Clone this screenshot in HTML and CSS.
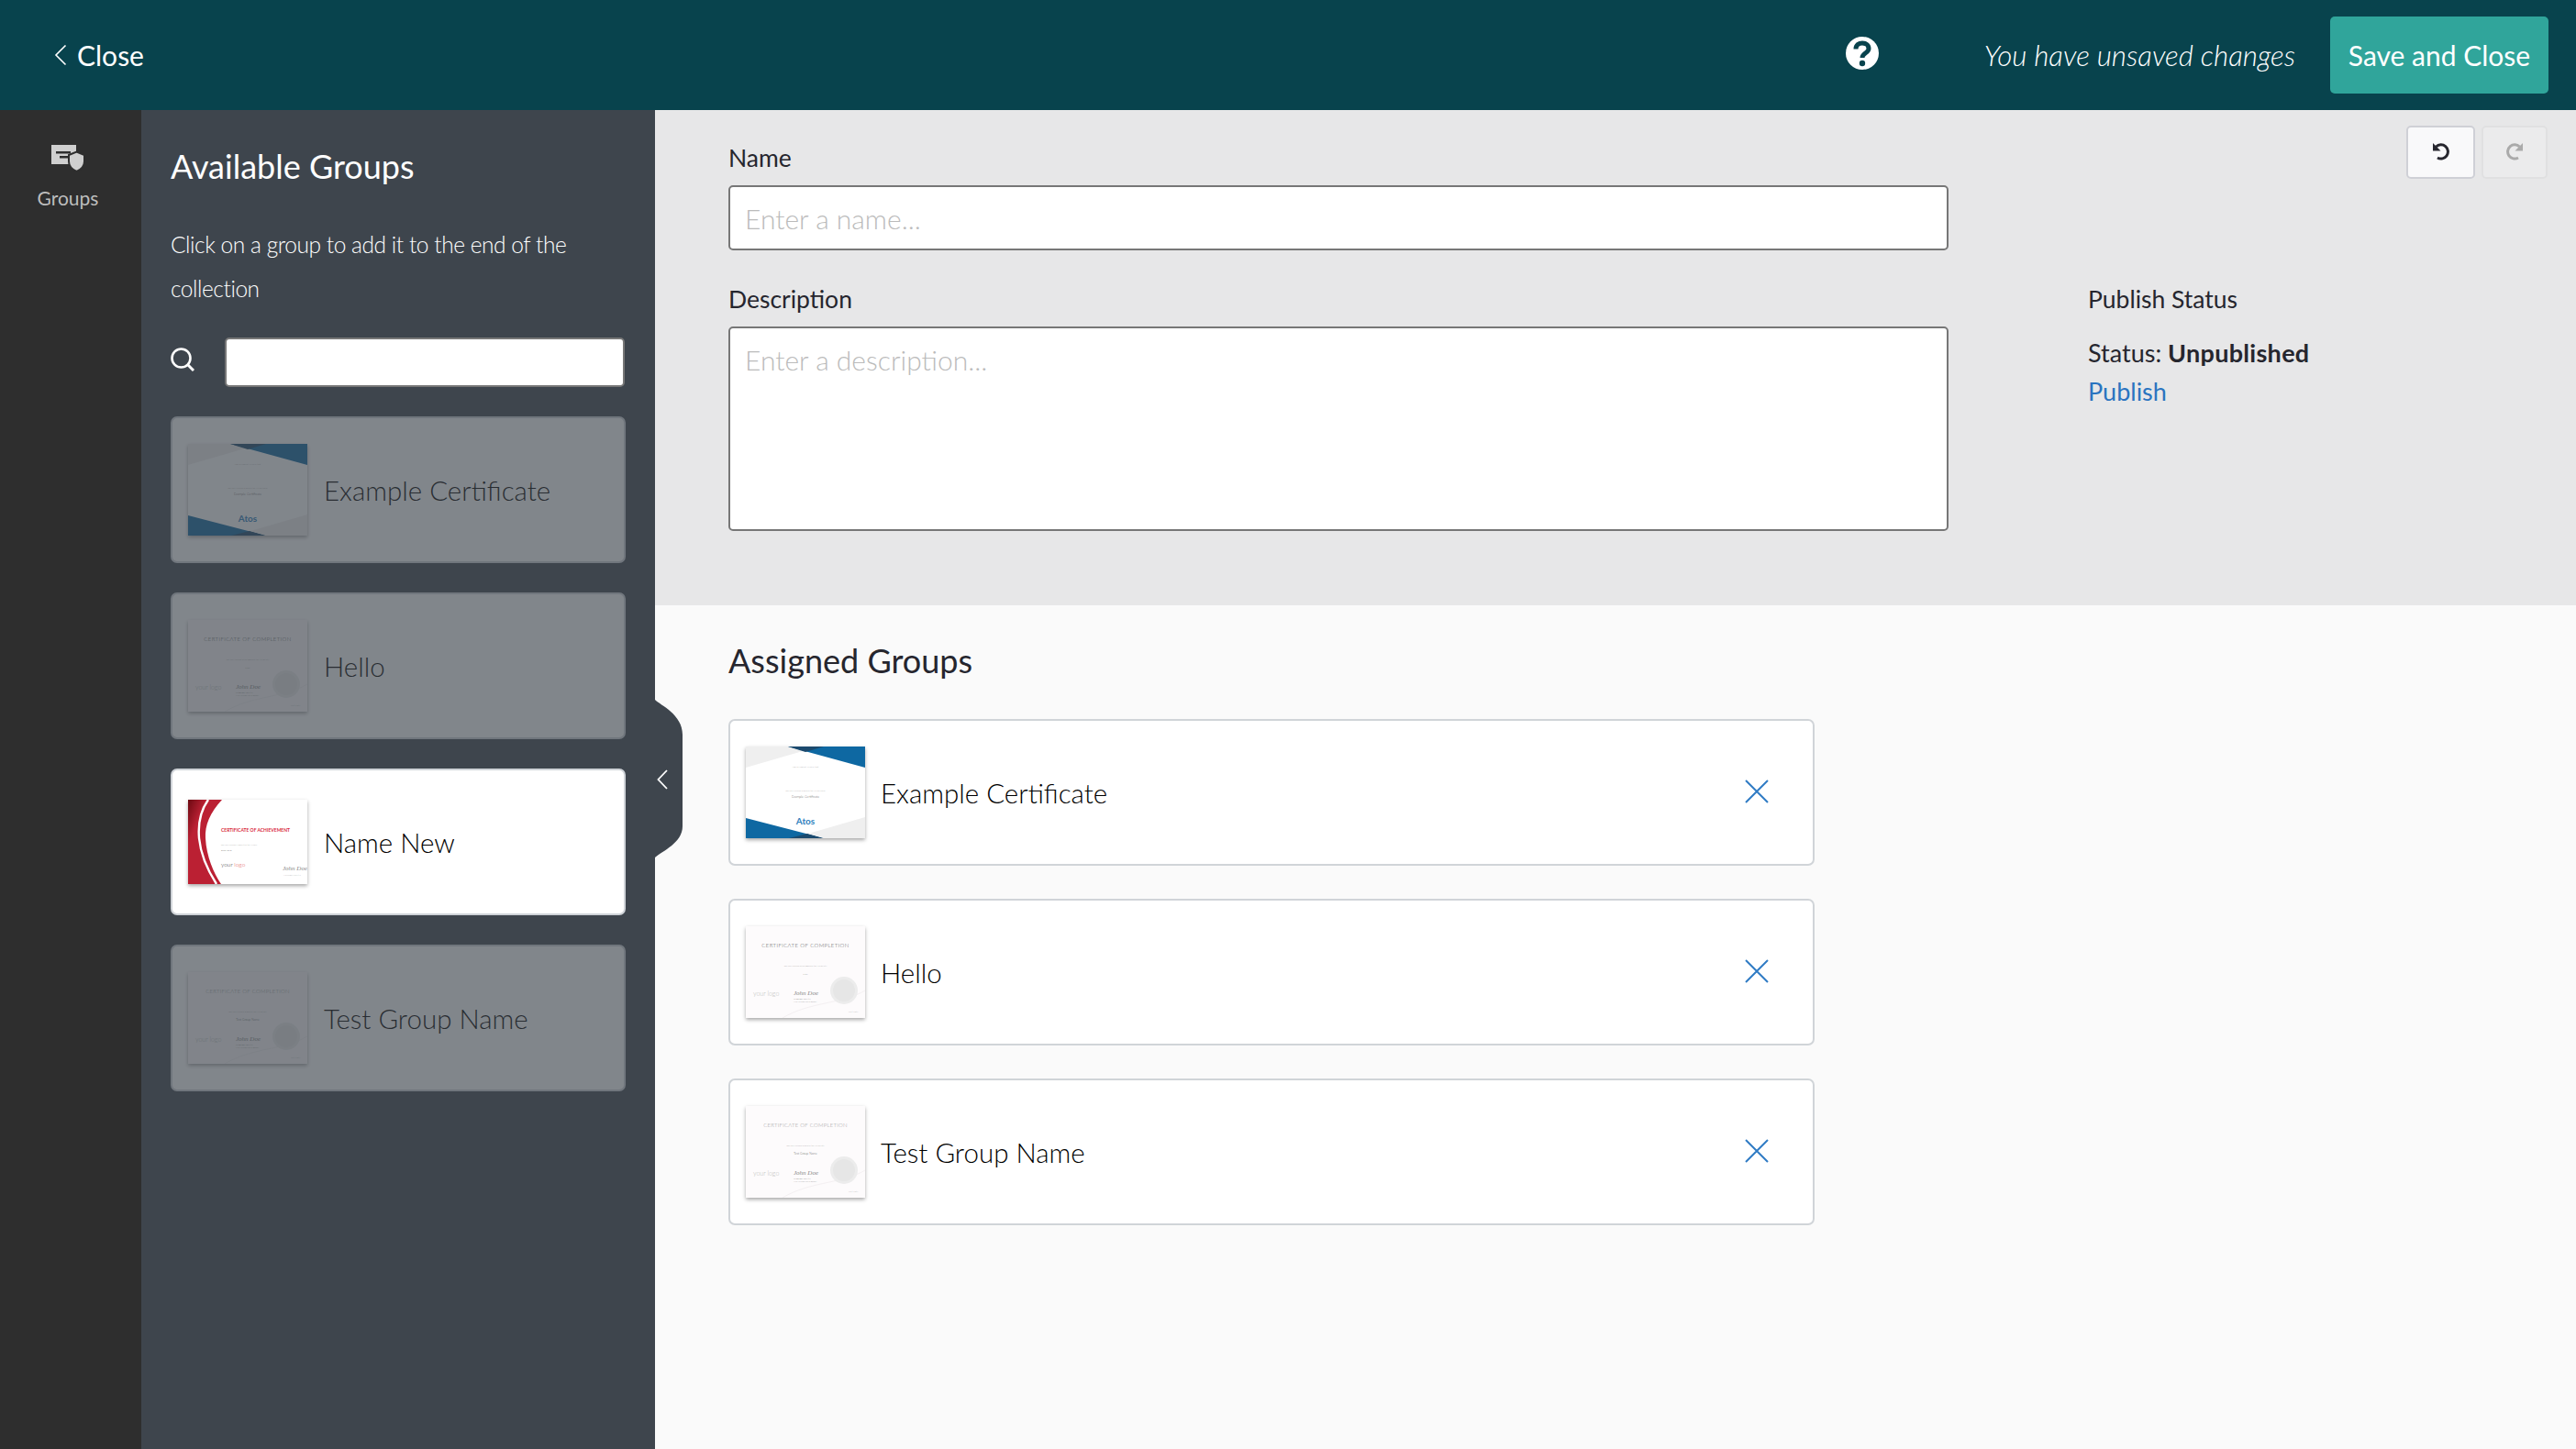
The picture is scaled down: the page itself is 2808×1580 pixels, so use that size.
FILE: index.html
```html
<!DOCTYPE html>
<html>
<head>
	<title>Edit Collection</title>
	<link rel="stylesheet" href="styles.css">
</head>
<body>
	<header class="topbar">
		<a class="close">
			<svg width="14" height="24" viewBox="0 0 14 24"><path d="M12.5 1.5 L2 12 L12.5 22.5" fill="none" stroke="#fff" stroke-width="1.6"/></svg>
			<span>Close</span>
		</a>
		<svg class="help" width="36" height="36" viewBox="0 0 36 36">
			<circle cx="18" cy="18" r="18" fill="#fff"/>
			<path d="M11 13.5 C11 4.5 25 5 25 13 C25 18 18 17.5 18 23" fill="none" stroke="#08434d" stroke-width="5"/>
			<circle cx="18" cy="29" r="3.2" fill="#08434d"/>
		</svg>
		<em class="unsaved">You have unsaved changes</em>
		<button class="save">Save and Close</button>
	</header>

	<div class="layout">
		<nav class="rail">
			<a class="rail-item">
				<svg width="36" height="29" viewBox="0 0 36 29">
					<rect x="0" y="0" width="27" height="21" fill="#cfcfcf"/>
					<rect x="5" y="7" width="16" height="2.5" fill="#2e2e2e"/>
					<rect x="9" y="12" width="11" height="2.5" fill="#2e2e2e"/>
					<path d="M19 11 L27.5 7.5 L36 11 V18 C36 23 32 27 27.5 29 C23 27 19 23 19 18 Z" fill="#cfcfcf" stroke="#2e2e2e" stroke-width="2"/>
				</svg>
				<span>Groups</span>
			</a>
		</nav>

		<aside class="panel">
			<h2>Available Groups</h2>
			<p class="hint">Click on a group to add it to the end of the collection</p>
			<div class="search">
				<svg width="26" height="26" viewBox="0 0 26 26">
					<circle cx="11.5" cy="11.5" r="10" fill="none" stroke="#fff" stroke-width="2.6"/>
					<path d="M18 18 L25 25" stroke="#fff" stroke-width="3"/>
				</svg>
				<input type="text">
			</div>
			<div class="group used">
				<svg class="thumb" viewBox="0 0 130 100">
					<rect width="130" height="100" fill="#fff"/>
					<polygon points="0,0 46,0 62,5 0,23" fill="#efefef"/>
					<polygon points="46,0 130,0 130,23" fill="#0e68a2"/>
					<polygon points="46,0 85,0 65,6" fill="#1c4a6e"/>
					<polygon points="0,78 85,100 0,100" fill="#0e68a2"/>
					<polygon points="47,100 67,95 85,100" fill="#1c4a6e"/>
					<polygon points="130,77 130,100 85,100 68,95" fill="#efefef"/>
					<text x="65" y="23" class="tiny">This document certifies that</text>
					<text x="65" y="49" class="tiny">has successfully achieved the certification</text>
					<text x="65" y="56" class="small">Example Certificate</text>
					<text x="65" y="85" class="atos">Atos</text>
				</svg>
				<span>Example Certificate</span>
			</div>
			<div class="group used">
				<svg class="thumb" viewBox="0 0 130 100">
					<rect width="130" height="100" fill="#fdfbfc"/>
					<path d="M40 100 C70 82 105 85 130 70" fill="none" stroke="#f4f0f2" stroke-width="1"/>
					<text x="65" y="23" class="title">CERTIFICATE OF COMPLETION</text>
					<text x="65" y="44" class="tiny">has successfully been awarded the certificate</text>
					<text x="65" y="53" class="tiny dark">Hello</text>
					<text x="8" y="76" class="logo-grey">your logo</text>
					<text x="52" y="75" class="sign">John Doe</text>
					<text x="52" y="80" class="tiny left dark">Company Director</text>
					<text x="52" y="83" class="tiny left">Your Organization Name</text>
					<circle cx="107" cy="70" r="15" fill="#ececec"/>
					<circle cx="107" cy="70" r="12" fill="#e6e6e6"/>
					<text x="112" y="94" class="tiny left">Cert Date</text>
				</svg>
				<span>Hello</span>
			</div>
			<div class="group">
				<svg class="thumb short" viewBox="0 0 130 92">
					<defs>
						<linearGradient id="red-fade" x1="0" y1="0" x2="0.6" y2="0.6">
							<stop offset="0" stop-color="#6c0a12"/>
							<stop offset="0.45" stop-color="#bb2033"/>
						</linearGradient>
					</defs>
					<rect width="130" height="92" fill="#fff"/>
					<path d="M0 0 H37 C24 14 18 28 19 42 C20 62 28 80 36 92 H0 Z" fill="url(#red-fade)"/>
					<path d="M22 0 C12 14 11 30 12 42 C14 62 22 78 31 92" fill="none" stroke="#fff" stroke-width="2.4"/>
					<text x="36" y="35" class="red-title">CERTIFICATE OF ACHIEVEMENT</text>
					<text x="36" y="50" class="tiny left">has successfully completed the course</text>
					<text x="36" y="56" class="tiny left dark">Name New</text>
					<text x="36" y="73" class="your">your <tspan fill="#e2534f">logo</tspan></text>
					<text x="103" y="77" class="sign">John Doe</text>
					<text x="104" y="83" class="tiny left">Executive Director</text>
				</svg>
				<span>Name New</span>
			</div>
			<div class="group used">
				<svg class="thumb" viewBox="0 0 130 100">
					<rect width="130" height="100" fill="#fdfbfc"/>
					<path d="M40 100 C70 82 105 85 130 70" fill="none" stroke="#f4f0f2" stroke-width="1"/>
					<text x="65" y="23" class="title light">CERTIFICATE OF COMPLETION</text>
					<text x="65" y="44" class="tiny">has successfully achieved the certificate</text>
					<text x="65" y="53" class="tiny big">Test Group Name</text>
					<text x="8" y="76" class="logo-grey">your logo</text>
					<text x="52" y="75" class="sign">John Doe</text>
					<text x="52" y="80" class="tiny left dark">Company Director</text>
					<text x="52" y="83" class="tiny left">Your Organization Name</text>
					<circle cx="107" cy="70" r="15" fill="#ececec"/>
					<circle cx="107" cy="70" r="12" fill="#e6e6e6"/>
					<text x="112" y="94" class="tiny left">Cert Date</text>
				</svg>
				<span>Test Group Name</span>
			</div>

			<svg class="tab" width="30" height="172" viewBox="0 0 30 172">
				<path d="M0 0 C6 6 30 16 30 38 V138 C30 156 8 165 0 172 Z" fill="#3e454d"/>
				<path d="M13 77 L3.5 87 L13 97" fill="none" stroke="#fff" stroke-width="1.8"/>
			</svg>
		</aside>

		<main class="content">
			<section class="details">
				<div class="form">
					<label>Name</label>
					<input type="text" placeholder="Enter a name...">
					<label class="second">Description</label>
					<textarea placeholder="Enter a description..."></textarea>
				</div>
				<div class="side">
					<div class="history">
						<button class="hist">
							<svg width="20" height="20" viewBox="0 0 20 20">
								<path d="M4.5 5 A7.6 7.6 0 1 1 6 17" fill="none" stroke="#26262e" stroke-width="3"/>
								<polygon points="1,1 1,9.5 9.5,9.5" fill="#26262e"/>
							</svg>
						</button>
						<button class="hist off">
							<svg width="20" height="20" viewBox="0 0 20 20">
								<path d="M15.5 5 A7.6 7.6 0 1 0 14 17" fill="none" stroke="#aaa" stroke-width="3"/>
								<polygon points="19,1 19,9.5 10.5,9.5" fill="#aaa"/>
							</svg>
						</button>
					</div>
					<div class="publish-title">Publish Status</div>
					<div class="publish-state">Status: <b>Unpublished</b></div>
					<a class="publish-link">Publish</a>
				</div>
			</section>

			<section class="assigned">
				<h2>Assigned Groups</h2>
				<div class="assigned-list">
					<div class="assigned-item">
						<svg class="thumb" viewBox="0 0 130 100">
							<rect width="130" height="100" fill="#fff"/>
							<polygon points="0,0 46,0 62,5 0,23" fill="#efefef"/>
							<polygon points="46,0 130,0 130,23" fill="#0e68a2"/>
							<polygon points="46,0 85,0 65,6" fill="#1c4a6e"/>
							<polygon points="0,78 85,100 0,100" fill="#0e68a2"/>
							<polygon points="47,100 67,95 85,100" fill="#1c4a6e"/>
							<polygon points="130,77 130,100 85,100 68,95" fill="#efefef"/>
							<text x="65" y="23" class="tiny">This document certifies that</text>
							<text x="65" y="49" class="tiny">has successfully achieved the certification</text>
							<text x="65" y="56" class="small">Example Certificate</text>
							<text x="65" y="85" class="atos">Atos</text>
						</svg>
						<span>Example Certificate</span>
						<svg class="remove" width="26" height="26" viewBox="0 0 26 26"><path d="M1 1 L25 25 M25 1 L1 25" stroke="#2f7bc4" stroke-width="2"/></svg>
					</div>
					<div class="assigned-item">
						<svg class="thumb" viewBox="0 0 130 100">
							<rect width="130" height="100" fill="#fdfbfc"/>
							<path d="M40 100 C70 82 105 85 130 70" fill="none" stroke="#f4f0f2" stroke-width="1"/>
							<text x="65" y="23" class="title">CERTIFICATE OF COMPLETION</text>
							<text x="65" y="44" class="tiny">has successfully been awarded the certificate</text>
							<text x="65" y="53" class="tiny dark">Hello</text>
							<text x="8" y="76" class="logo-grey">your logo</text>
							<text x="52" y="75" class="sign">John Doe</text>
							<text x="52" y="80" class="tiny left dark">Company Director</text>
							<text x="52" y="83" class="tiny left">Your Organization Name</text>
							<circle cx="107" cy="70" r="15" fill="#ececec"/>
							<circle cx="107" cy="70" r="12" fill="#e6e6e6"/>
							<text x="112" y="94" class="tiny left">Cert Date</text>
						</svg>
						<span>Hello</span>
						<svg class="remove" width="26" height="26" viewBox="0 0 26 26"><path d="M1 1 L25 25 M25 1 L1 25" stroke="#2f7bc4" stroke-width="2"/></svg>
					</div>
					<div class="assigned-item">
						<svg class="thumb" viewBox="0 0 130 100">
							<rect width="130" height="100" fill="#fdfbfc"/>
							<path d="M40 100 C70 82 105 85 130 70" fill="none" stroke="#f4f0f2" stroke-width="1"/>
							<text x="65" y="23" class="title light">CERTIFICATE OF COMPLETION</text>
							<text x="65" y="44" class="tiny">has successfully achieved the certificate</text>
							<text x="65" y="53" class="tiny big">Test Group Name</text>
							<text x="8" y="76" class="logo-grey">your logo</text>
							<text x="52" y="75" class="sign">John Doe</text>
							<text x="52" y="80" class="tiny left dark">Company Director</text>
							<text x="52" y="83" class="tiny left">Your Organization Name</text>
							<circle cx="107" cy="70" r="15" fill="#ececec"/>
							<circle cx="107" cy="70" r="12" fill="#e6e6e6"/>
							<text x="112" y="94" class="tiny left">Cert Date</text>
						</svg>
						<span>Test Group Name</span>
						<svg class="remove" width="26" height="26" viewBox="0 0 26 26"><path d="M1 1 L25 25 M25 1 L1 25" stroke="#2f7bc4" stroke-width="2"/></svg>
					</div>
				</div>
			</section>
		</main>
	</div>
</body>
</html>
```

FILE: styles.css
```css
* {
	box-sizing: border-box;
}
html, body {
	height: 100%;
}
body {
	margin: 0;
	display: flex;
	flex-direction: column;
	overflow: hidden;
	font-family: "Lato", "Noto Sans", sans-serif;
	color: #26262e;
}

/* top bar */
.topbar {
	height: 120px;
	flex: none;
	display: flex;
	align-items: center;
	padding: 0 30px 0 59px;
	background: #08434d;
	color: #fff;
}
.close {
	display: flex;
	align-items: center;
	gap: 11px;
	font-size: 30px;
}
.help {
	margin-left: auto;
	margin-top: -4px;
}
.unsaved {
	margin-left: 115px;
	font-size: 31.3px;
	font-weight: 300;
}
.save {
	margin-left: 38px;
	width: 238px;
	height: 84px;
	padding: 0;
	border: 0;
	border-radius: 5px;
	background: #30a59b;
	color: #fff;
	font-family: inherit;
	font-size: 30px;
}

.layout {
	flex: 1;
	display: flex;
	min-height: 0;
}

/* left rail */
.rail {
	width: 154px;
	flex: none;
	padding: 38px 6px 0 0;
	background: #2e2e2e;
}
.rail-item {
	display: flex;
	flex-direction: column;
	align-items: center;
	gap: 16px;
	color: #bdbdbd;
	font-size: 21px;
}

/* available groups */
.panel {
	position: relative;
	z-index: 1;
	width: 560px;
	flex: none;
	padding: 36px 32px 0;
	background: #3e454d;
	color: #fff;
}
.panel h2 {
	margin: 0 0 37px;
	font-size: 36px;
	line-height: 50px;
	font-weight: 400;
}
.hint {
	margin: 0 0 29px;
	font-size: 24.5px;
	letter-spacing: -.45px;
	line-height: 48px;
	font-weight: 300;
}
.search {
	display: flex;
	align-items: center;
	gap: 33px;
	margin-bottom: 32px;
}
.search svg {
	margin-top: -6px;
}
.search input {
	width: 436px;
	height: 54px;
	border: 2px solid #777;
	border-radius: 5px;
	background: #fff;
}
.group {
	display: flex;
	align-items: center;
	height: 160px;
	margin-bottom: 32px;
	padding-left: 17px;
	gap: 18px;
	border: 2px solid #cfd3d8;
	border-radius: 7px;
	background: #fff;
	color: #000;
	font-size: 29.5px;
	font-weight: 300;
}
.group.used {
	opacity: .35;
}
.thumb {
	width: 130px;
	height: 100px;
	flex: none;
	box-shadow: 0 2px 4px rgba(0, 0, 0, .35);
}
.thumb.short {
	height: 92px;
}
.tab {
	position: absolute;
	left: 100%;
	top: 643px;
}

/* certificate thumbnails */
.thumb text {
	text-anchor: middle;
	font-family: "Lato", sans-serif;
}
.thumb .tiny {
	font-size: 2.4px;
	fill: #777;
}
.thumb .tiny.left {
	text-anchor: start;
}
.thumb .tiny.dark {
	fill: #333;
}
.thumb .tiny.big {
	font-size: 3.4px;
	fill: #666;
}
.thumb .small {
	font-size: 3.6px;
	fill: #666;
}
.thumb .atos {
	font-size: 10px;
	font-weight: 700;
	fill: #2f7fbd;
}
.thumb .title {
	font-size: 6px;
	letter-spacing: .4px;
	fill: #555;
}
.thumb .title.light {
	fill: #999;
	letter-spacing: .25px;
}
.thumb .logo-grey {
	text-anchor: start;
	font-size: 7px;
	fill: #bbb;
}
.thumb .sign {
	text-anchor: start;
	font-family: "Liberation Serif", serif;
	font-style: italic;
	font-size: 7px;
	fill: #888;
}
.thumb .red-title {
	text-anchor: start;
	font-size: 5px;
	font-weight: 700;
	fill: #d81f3a;
}
.thumb .your {
	text-anchor: start;
	font-size: 6.5px;
	fill: #333;
}

/* main area */
.content {
	flex: 1;
	min-width: 0;
	background: #fafafa;
}
.details {
	height: 540px;
	display: flex;
	padding: 17px 31px 0 80px;
	background: #e7e7e8;
	font-size: 26.5px;
}
.form {
	width: 1330px;
	flex: none;
	padding-top: 15px;
}
.form label {
	display: block;
	line-height: 40px;
	margin-bottom: 10px;
}
.form label.second {
	margin-top: 33px;
}
.form input, .form textarea {
	display: block;
	width: 100%;
	padding: 0 16px;
	border: 2px solid #777;
	border-radius: 5px;
	background: #fff;
	font-family: inherit;
	font-size: 30px;
	font-weight: 300;
	resize: none;
}
.form input {
	height: 71px;
}
.form textarea {
	height: 223px;
	padding-top: 16px;
}
.form ::placeholder {
	color: #bbb;
}
.side {
	flex: 1;
	margin-left: 152px;
	display: flex;
	flex-direction: column;
}
.history {
	display: flex;
	justify-content: flex-end;
	gap: 7px;
	margin-bottom: 111px;
}
.hist {
	width: 75px;
	height: 58px;
	padding: 0 0 2px;
	display: flex;
	align-items: center;
	justify-content: center;
	border: 2px solid #cfd0d6;
	border-radius: 5px;
	background: #f9f9fa;
}
.hist.off {
	width: 72px;
	border-color: #e0e0e1;
	background: #ebebec;
}
.publish-title {
	line-height: 40px;
	margin-bottom: 18px;
}
.publish-state {
	line-height: 42px;
	font-size: 27px;
}
.publish-state b {
	letter-spacing: .3px;
}
.publish-link {
	line-height: 42px;
	font-size: 27px;
	color: #2a74c0;
}

/* assigned groups */
.assigned {
	padding: 35px 0 0 80px;
}
.assigned h2 {
	margin: 0 0 39px;
	font-size: 36px;
	line-height: 50px;
	font-weight: 400;
}
.assigned-list {
	display: flex;
	flex-direction: column;
	gap: 36px;
	width: 1184px;
}
.assigned-item {
	display: flex;
	align-items: center;
	height: 160px;
	padding-left: 17px;
	gap: 17px;
	border: 2px solid #d0d4d8;
	border-radius: 7px;
	background: #fff;
	font-size: 29.5px;
	font-weight: 300;
	color: #000;
}
.remove {
	margin-left: auto;
	margin-right: 48px;
	margin-top: -2px;
}
```
